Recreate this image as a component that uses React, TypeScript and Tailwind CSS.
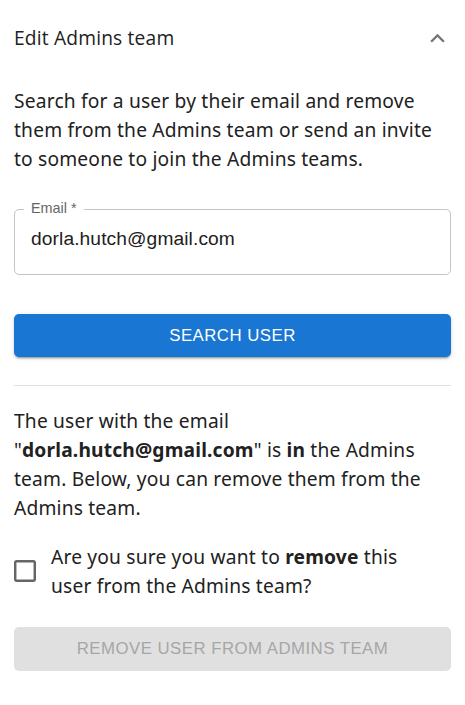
export default function App() {
  return (
    <div className="w-[465px] min-h-[705px] bg-white text-[#212121] font-['Open_Sans',sans-serif]">
      <div className="flex h-[77px] items-center justify-between pl-[14px] pr-[13px]">
        <h2 className="text-[19.2px] leading-[1.5] tracking-[0.18px]">Edit Admins team</h2>
        <svg viewBox="0 0 24 24" className="h-[29px] w-[29px] fill-[#757575]">
          <path d="m12 8-6 6 1.41 1.41L12 10.83l4.59 4.58L18 14z" />
        </svg>
      </div>

      <div className="flex flex-col px-[14px] font-['Noto_Sans',sans-serif]">
        <p className="mt-[9px] text-[19.2px] leading-[29px] tracking-[0.18px]">
          Search for a user by their email and remove them from the Admins team or send an invite to someone to join the Admins teams.
        </p>

        <div className="relative mt-[36px] flex h-[66px] items-center rounded-[5px] border border-[#c4c4c4] pb-[5px] pl-[16px] font-['Liberation_Sans',Arial,sans-serif]">
          <span className="absolute -top-[11px] left-[9px] bg-white px-[7px] text-[14.4px] leading-[18px] text-[#666666]">
            Email *
          </span>
          <span className="text-[19.2px] tracking-[0.1px] text-[#212121]">dorla.hutch@gmail.com</span>
        </div>

        <button className="mt-[39px] flex h-[43px] items-center justify-center rounded-[5px] bg-[#1976d2] font-['Liberation_Sans',Arial,sans-serif] text-[16.8px] tracking-[0.48px] text-white shadow-[0_3px_1px_-2px_rgba(0,0,0,0.2),0_2px_2px_0_rgba(0,0,0,0.14),0_1px_5px_0_rgba(0,0,0,0.12)]">
          SEARCH USER
        </button>

        <hr className="mt-[28px] border-[#e0e0e0]" />

        <p className="mt-[20px] text-[19.2px] leading-[29px] tracking-[0.18px]">
          The user with the email "<b>dorla.hutch@gmail.com</b>" is <b>in</b> the Admins team. Below, you can remove them from the Admins team.
        </p>

        <label className="mt-[20px] flex items-center gap-[15px] pr-[19px]">
          <svg viewBox="3 3 18 18" className="h-[22px] w-[22px] shrink-0 fill-[#666666]">
            <path d="M19 5v14H5V5h14m0-2H5c-1.11 0-2 .9-2 2v14c0 1.1.89 2 2 2h14c1.1 0 2-.9 2-2V5c0-1.1-.9-2-2-2z" />
          </svg>
          <span className="text-[19.2px] leading-[29px] tracking-[0.18px]">
            Are you sure you want to <b>remove</b> this user from the Admins team?
          </span>
        </label>

        <button
          disabled
          className="mt-[27px] flex h-[44px] items-center justify-center rounded-[5px] bg-[#e0e0e0] font-['Liberation_Sans',Arial,sans-serif] text-[16.8px] tracking-[0.48px] text-[#a6a6a6]"
        >
          REMOVE USER FROM ADMINS TEAM
        </button>
      </div>
    </div>
  );
}
